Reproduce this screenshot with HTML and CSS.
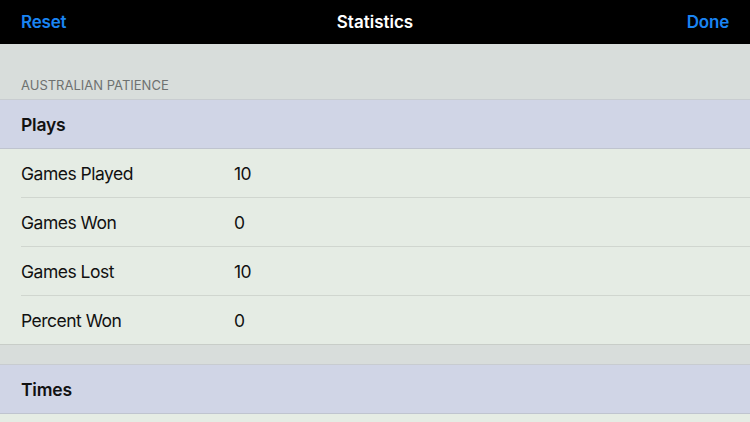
FILE: index.html
```html
<!DOCTYPE html>
<html lang="en">

<head>
    <meta charset="UTF-8">
    <meta name="viewport" content="width=device-width, initial-scale=1.0">
    <title>Statistics</title>
    <link rel="stylesheet" href="styles.css">
</head>

<body>

    <div class="navbar">
        <span class="nav-btn">Reset</span>
        <span class="nav-title">Statistics</span>
        <span class="nav-btn">Done</span>
    </div>

    <div class="group-title">AUSTRALIAN PATIENCE</div>

    <div class="section">
        <div class="section-head">Plays</div>
        <div class="row"><span class="label">Games Played</span><span class="value">10</span></div>
        <div class="row"><span class="label">Games Won</span><span class="value">0</span></div>
        <div class="row"><span class="label">Games Lost</span><span class="value">10</span></div>
        <div class="row"><span class="label">Percent Won</span><span class="value">0</span></div>
    </div>

    <div class="spacer"></div>

    <div class="section">
        <div class="section-head">Times</div>
        <div class="row"></div>
    </div>

</body>

</html>
```

FILE: styles.css
```css
body {
    margin: 0;
    padding: 0;
    background-color: #d8dddb;
    font-family: Inter, 'Liberation Sans', sans-serif;
    overflow: hidden;
}

.navbar {
    height: 44px;
    background-color: #000;
    display: flex;
    align-items: center;
    justify-content: space-between;
    padding: 0 21px;
}

.nav-btn {
    color: #1a84f2;
    font-size: 17px;
    font-weight: 600;
    width: 80px;
    letter-spacing: -0.2px;
}

.nav-btn:last-child {
    text-align: right;
}

.nav-title {
    color: #fff;
    font-size: 17px;
    font-weight: 600;
}

.group-title {
    height: 56px;
    box-sizing: border-box;
    padding: 0 21px 6px;
    display: flex;
    align-items: flex-end;
    font-size: 13px;
    color: #6e7170;
    border-bottom: 1px solid #c8ccd0;
}

.section-head {
    height: 48px;
    display: flex;
    align-items: center;
    padding: 0 21px;
    background-color: #d0d5e6;
    font-size: 17.5px;
    font-weight: 600;
    color: #111;
    letter-spacing: -0.2px;
    border-bottom: 1px solid #bfc4cf;
}

.row {
    height: 49px;
    box-sizing: border-box;
    padding: 0 0 1px 21px;
    display: flex;
    align-items: center;
    background-color: #e5ece4;
    font-size: 17.5px;
    letter-spacing: -0.5px;
    color: #111;
    position: relative;
}

.row::after {
    content: '';
    position: absolute;
    left: 21px;
    right: 0;
    bottom: 0;
    border-bottom: 1px solid #d0d6cf;
}

.row:last-child::after {
    left: 0;
    border-color: #c8cdc8;
}

.label {
    width: 213px;
}

.spacer {
    height: 19px;
    border-bottom: 1px solid #c8ccd0;
}
```
